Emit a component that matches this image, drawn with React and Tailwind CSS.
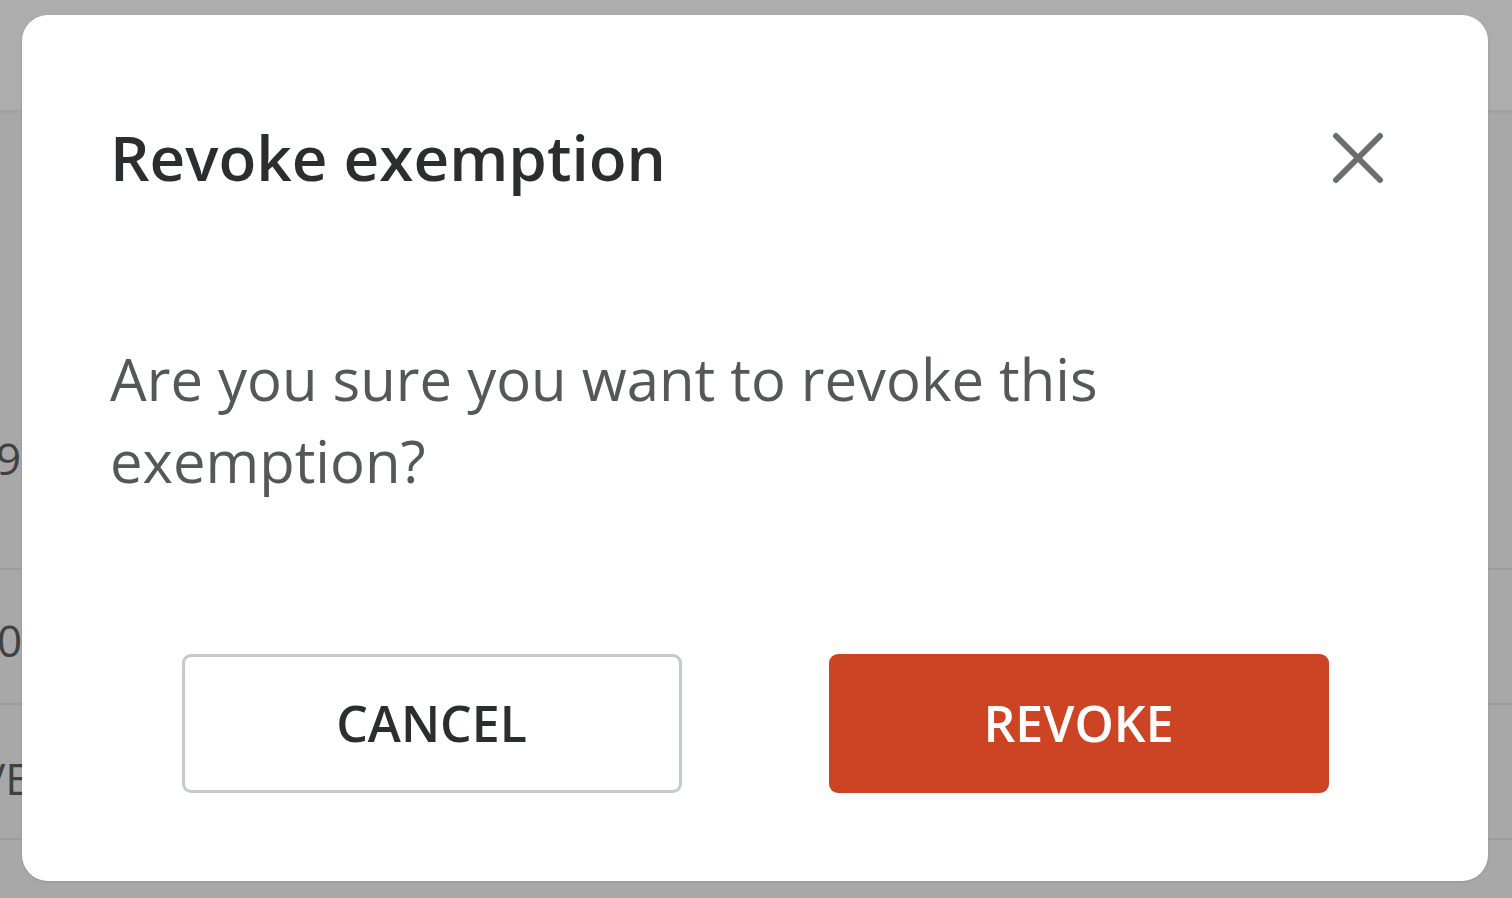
export default function App() {
  const font = { fontFamily: '"Open Sans", "Noto Sans", sans-serif' }
  return (
    <div className="relative w-[1512px] h-[898px] overflow-hidden bg-[#a8a8a8]" style={font}>
      {/* page behind the overlay */}
      <div className="h-[113px] bg-[#adadad] border-b-[3px] border-[#a2a2a2]" />
      <div className="h-[319px]" />
      <div className="h-[138px] border-b-2 border-[#9c9c9c] pt-[2px] text-[44px] leading-[48px] text-[#3f4142]">
        <span className="-ml-[4px]">9</span>
      </div>
      <div className="h-[135px] border-b-2 border-[#9c9c9c] flex items-center text-[44px] text-[#3f4142]">
        <span className="-ml-[3px] pt-[6px]">0</span>
      </div>
      <div className="h-[135px] border-b-2 border-[#9c9c9c] flex items-center text-[44px] text-[#3f4142]">
        <span className="-ml-[21px] pt-[12px]">VE</span>
      </div>

      {/* dialog */}
      <div className="absolute left-[22px] top-[15px] w-[1466px] h-[866px] bg-white rounded-[26px] shadow-sm flex flex-col">
        <div className="flex items-start justify-between pl-[88px] pr-[104px] pt-[111px]">
          <h2 className="text-[62px] leading-none font-semibold text-[#2b2e30]">Revoke exemption</h2>
          <button className="mt-[6px] text-[#6b6e70]">
            <svg width="52" height="52" viewBox="0 0 52 52" fill="none" stroke="currentColor" strokeWidth="6" strokeLinecap="round">
              <path d="M4 4L48 48M48 4L4 48" />
            </svg>
          </button>
        </div>
        <p className="mt-[150px] pl-[88px] pr-[300px] text-[58px] leading-[82px] text-[#54585a]">
          Are you sure you want to revoke this exemption?
        </p>
        <div className="mt-auto mb-[88px] flex justify-center gap-[147px]">
          <button className="w-[500px] h-[139px] rounded-[9px] border-[3px] border-[#c4c9cb] bg-white text-[50px] font-semibold text-[#2b2e30]">
            CANCEL
          </button>
          <button className="w-[500px] h-[139px] rounded-[9px] bg-[#cc4423] text-[50px] font-semibold text-white">
            REVOKE
          </button>
        </div>
      </div>
    </div>
  )
}
